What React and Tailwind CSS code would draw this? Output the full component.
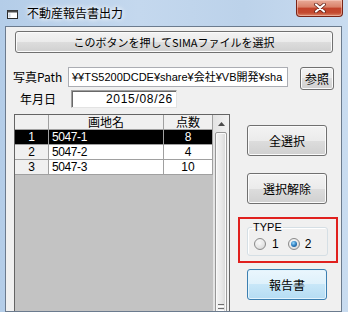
const JP = "font-['Noto_Sans_CJK_JP',sans-serif]";
const LAT = "font-['Liberation_Sans','Noto_Sans_CJK_JP',sans-serif]";
const BTN =
  "flex items-center justify-center rounded-[3px] border border-[#707070] bg-[linear-gradient(to_bottom,#f3f3f3_0%,#ebebeb_50%,#dddddd_50%,#d0d0d0_100%)] shadow-[inset_0_0_0_1px_#fbfbfb] leading-none text-black shrink-0";
const BTN_BLUE =
  "flex items-center justify-center rounded-[3px] border border-[#3c7fb1] bg-[linear-gradient(to_bottom,#eaf6fd_0%,#def1fb_50%,#c8e7f8_50%,#b5dcf3_100%)] shadow-[inset_0_0_0_1px_#e3f4fd] leading-none text-black shrink-0";

function Radio({ checked }) {
  return (
    <div className="w-[12px] h-[12px] rounded-full border border-[#8a8a8a] bg-[radial-gradient(circle_at_40%_35%,#ffffff_0%,#e6e6e6_55%,#c8c8c8_100%)] flex items-center justify-center shrink-0">
      {checked ? (
        <div className="w-[6px] h-[6px] rounded-full bg-[radial-gradient(circle_at_40%_35%,#9bdcff_0%,#2f7fc0_50%,#12467c_100%)]" />
      ) : (
        <div className="w-[6px] h-[6px] rounded-full bg-[radial-gradient(circle_at_40%_35%,#fafafa_0%,#dcdcdc_100%)]" />
      )}
    </div>
  );
}

function Row({ n, name, pts, sel }) {
  const cellText = sel ? "text-white" : "text-black";
  return (
    <div className={`flex h-[15px] shrink-0 ${LAT} text-[12px] leading-none`}>
      <div
        className={`w-[34px] border-r border-b border-[#a0a0a0] flex items-center justify-center ${
          sel ? "bg-black" : "bg-[#f0f0f0]"
        } ${cellText}`}
      >
        {n}
      </div>
      <div
        className={`w-[115px] border-r border-b border-[#a0a0a0] flex items-center pl-[3px] tracking-[-0.4px] ${
          sel ? "bg-black" : "bg-white"
        } ${cellText}`}
      >
        {name}
      </div>
      <div
        className={`w-[49px] border-r border-b border-[#a0a0a0] flex items-center justify-center ${
          sel ? "bg-black" : "bg-white"
        } ${cellText}`}
      >
        {pts}
      </div>
    </div>
  );
}

export default function App() {
  return (
    <div
      className={`w-[348px] h-[312px] overflow-hidden flex flex-col bg-[linear-gradient(to_right,#b4cde8_0%,#c4d8ee_40%,#bcd2ea_70%,#c9dcf0_100%)] ${JP} text-black`}
    >
      {/* Title bar */}
      <div className="h-[26px] shrink-0 flex items-start">
        <div className="flex items-center h-[26px] pl-[7px]">
          <svg width="11" height="10" viewBox="0 0 11 10" className="mt-[2px]">
            <rect x="0.5" y="1.5" width="10" height="8" fill="#ffffff" stroke="#2b2b2b" />
            <rect x="0.5" y="1.5" width="10" height="2" fill="#4a4a4a" />
            <rect x="1.5" y="4.5" width="2" height="4" fill="#cfd8e2" />
          </svg>
          <span className="ml-[9px] text-[12px] leading-none text-black [text-shadow:0_0_6px_#ffffff,0_0_4px_#ffffff]">
            不動産報告書出力
          </span>
        </div>
        <div className="ml-auto mr-[5px] w-[47px] h-[17px] rounded-b-[4px] border border-t-0 border-[#7a2416] bg-[linear-gradient(to_bottom,#e9ab98_0%,#d98068_45%,#c2432a_50%,#c44a30_80%,#dc8a6c_100%)] shadow-[inset_0_0_0_1px_rgba(255,220,210,0.45)] flex items-center justify-center">
          <svg width="12" height="10" viewBox="0 0 12 10">
            <path d="M2 1.5 L10 8.5 M10 1.5 L2 8.5" stroke="#5a1a10" strokeWidth="3.6" strokeLinecap="round" />
            <path d="M2 1.5 L10 8.5 M10 1.5 L2 8.5" stroke="#ffffff" strokeWidth="2.2" strokeLinecap="round" />
          </svg>
        </div>
      </div>

      {/* Client area */}
      <div className="flex-1 ml-[5px] mr-[6px] border border-[#6b7b8e] bg-[#f0f0f0] flex flex-col min-h-0 overflow-hidden">
        {/* Big button */}
        <div className={`${BTN} ml-[9px] mt-[4px] w-[318px] h-[22px] text-[11px]`}>
          このボタンを押してSIMAファイルを選択
        </div>

        {/* Path row */}
        <div className="mt-[14px] h-[23px] shrink-0 flex items-start">
          <div className="ml-[7px] w-[55px] h-[20px] flex items-center text-[12px] leading-none">
            写真Path
          </div>
          <div
            className={`w-[220px] h-[20px] border border-[#abadb3] bg-white overflow-hidden whitespace-nowrap flex items-center pl-[3px] text-[11px] leading-none ${LAT}`}
          >
            ¥¥TS5200DCDE¥share¥会社¥VB開発¥sha
          </div>
          <div className={`${BTN} ml-[12px] w-[34px] h-[23px] text-[12px]`}>参照</div>
        </div>

        {/* Date row */}
        <div className="h-[18px] shrink-0 flex items-start">
          <div className="ml-[14px] w-[51px] h-[18px] flex items-center text-[12px] leading-none">
            年月日
          </div>
          <div
            className={`w-[106px] h-[18px] border border-t-[#a0a0a0] border-l-[#a0a0a0] border-r-[#e3e3e3] border-b-[#e3e3e3] shadow-[inset_1px_1px_0_#696969] bg-white flex items-center justify-end pr-[3px] text-[12px] leading-none tracking-[0.7px] ${LAT}`}
          >
            2015/08/26
          </div>
        </div>

        {/* Main area */}
        <div className="mt-[6px] shrink-0 flex items-start">
          {/* Grid */}
          <div className="ml-[8px] w-[216px] h-[240px] shrink-0 border border-[#646464] bg-[#c3c3c3] flex">
            <div className="w-[198px] flex flex-col">
              <div className="flex h-[15px] shrink-0 text-[12px] leading-none">
                <div className="w-[34px] border-r border-b border-[#a0a0a0] bg-[#f0f0f0]" />
                <div className="w-[115px] border-r border-b border-[#a0a0a0] bg-[#f0f0f0] flex items-center justify-center">
                  画地名
                </div>
                <div className="w-[49px] border-r border-b border-[#a0a0a0] bg-[#f0f0f0] flex items-center justify-center">
                  点数
                </div>
              </div>
              <Row n="1" name="5047-1" pts="8" sel />
              <Row n="2" name="5047-2" pts="4" />
              <Row n="3" name="5047-3" pts="10" />
            </div>
            {/* Scrollbar */}
            <div className="w-[16px] bg-[linear-gradient(to_right,#e3e3e3,#f1f1f1)] flex flex-col">
              <div className="h-[17px] shrink-0 flex items-center justify-center">
                <svg width="7" height="4" viewBox="0 0 7 4">
                  <path d="M0 4 L3.5 0 L7 4 Z" fill="#4a4a4a" />
                </svg>
              </div>
              <div className="ml-[2px] w-[12px] h-[360px] shrink-0 rounded-[2px] border border-[#979797] bg-[linear-gradient(to_right,#f4f4f4_0%,#e9e9e9_50%,#d8d8d8_100%)] shadow-[inset_0_0_0_1px_#fafafa] flex flex-col items-center">
                <div className="mt-[171px] w-[6px] flex flex-col gap-[1px]">
                  <div className="h-[1px] bg-[#6f6f6f]" />
                  <div className="h-[1px] bg-white" />
                  <div className="h-[1px] bg-[#6f6f6f]" />
                  <div className="h-[1px] bg-white" />
                  <div className="h-[1px] bg-[#6f6f6f]" />
                </div>
              </div>
            </div>
          </div>

          {/* Right column */}
          <div className="ml-[8px] w-[100px] shrink-0 flex flex-col">
            <div className={`${BTN} mt-[11px] ml-[9px] w-[80px] h-[31px] text-[12px]`}>全選択</div>
            <div className={`${BTN} mt-[17px] ml-[9px] w-[80px] h-[31px] text-[12px]`}>選択解除</div>
            <div className="mt-[13px] w-[100px] h-[46px] shrink-0 border-2 border-[#e0201e]">
              <fieldset className="ml-[7px] mt-[2px] w-[81px] border border-[#d5dfe5] rounded-[3px] pb-[1px] shadow-[inset_1px_1px_0_#ffffff]">
                <legend className={`ml-[4px] px-[1px] text-[11px] leading-[13px] ${LAT}`}>TYPE</legend>
                <div className={`h-[20px] flex items-center text-[12px] leading-none ${LAT}`}>
                  <div className="ml-[6px]">
                    <Radio />
                  </div>
                  <span className="ml-[6px]">1</span>
                  <div className="ml-[9px]">
                    <Radio checked />
                  </div>
                  <span className="ml-[5px]">2</span>
                </div>
              </fieldset>
            </div>
            <div className={`${BTN_BLUE} mt-[6px] ml-[9px] w-[80px] h-[31px] text-[12px]`}>報告書</div>
          </div>
        </div>
      </div>
    </div>
  );
}
